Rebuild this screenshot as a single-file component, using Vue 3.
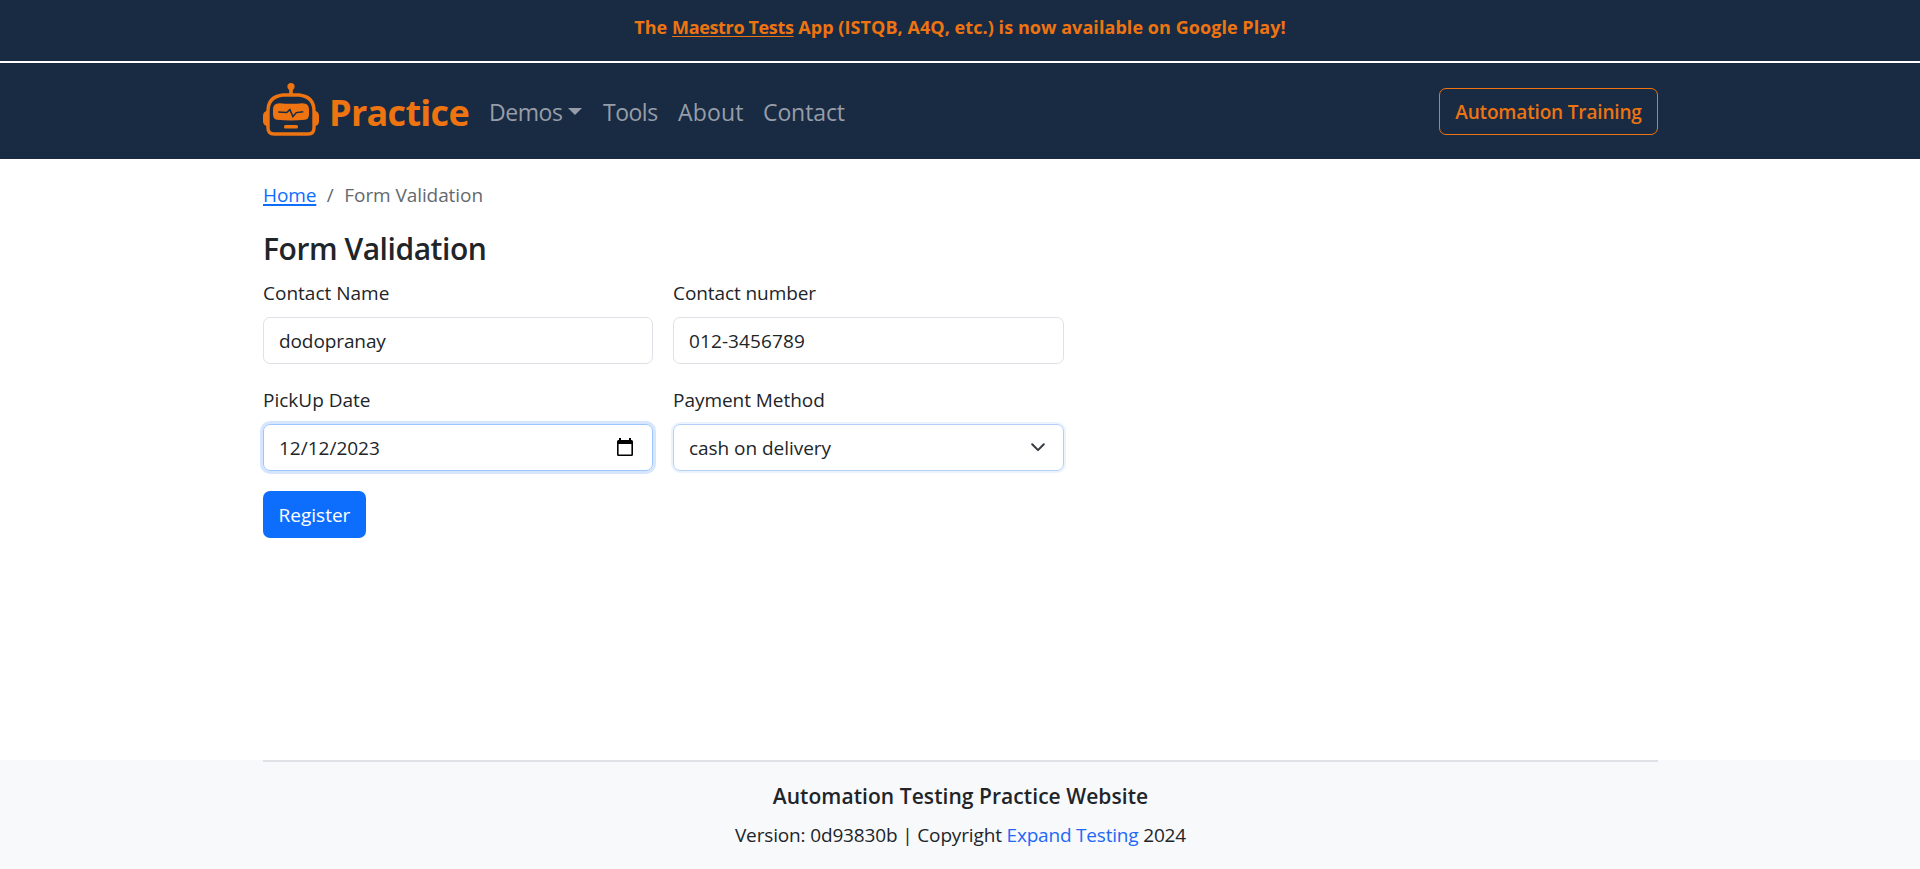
<script setup>
const links = [
  { label: 'Tools', cls: 'tools' },
  { label: 'About', cls: 'about' },
  { label: 'Contact', cls: 'contact' },
]
</script>

<template>
  <div class="page">
    <div class="banner">
      <span class="t-banner">The <a href="#">Maestro Tests</a> App (ISTQB, A4Q, etc.) is now available on Google Play!</span>
    </div>
    <header class="navbar">
      <div class="container nav-inner">
        <a class="brand" href="#">
          <svg class="robot" width="56" height="54" viewBox="0 0 56 54">
            <g fill="#ee7411">
              <circle cx="28" cy="3.600" r="3.600" />
              <rect x="26.200" y="6" width="3.600" height="6" />
              <path d="M5 28H3.500Q0 29 0 33v5q0 4 3.500 5H5zM51 28h1.500q3.500 1 3.500 5v5q0 4-3.500 5H51z" />
              <path d="M16.500 20.300q11.500 1 23 0q6.500 0 6.500 6v5q0 5-4 5.500q-14 1.200-28 0q-4-.5-4-5.500v-5q0-6 6.500-6z" />
              <rect x="21" y="42" width="14" height="3.600" rx="1.600" />
            </g>
            <path d="M20 12H36Q51 13.500 51 28V45Q51 51 45 51H11Q5 51 5 45V28Q5 13.500 20 12Z" fill="none" stroke="#ee7411" stroke-width="3.400" />
            <path d="M15.300 29l8.400.6 3.200-3 3 7 3.400-4 7-.8" fill="none" stroke="#182b43" stroke-width="1.500" />
          </svg>
          <span class="t-brand">Practice</span>
        </a>
        <nav class="links">
          <a class="link demos" href="#"><span>Demos</span><i class="caret"></i></a>
          <a v-for="l in links" :key="l.label" :class="['link', l.cls]" href="#">{{ l.label }}</a>
        </nav>
        <a class="training" href="#">Automation Training</a>
      </div>
    </header>

    <main class="container">
      <div class="crumbs">
        <a class="home" href="#">Home</a><span class="slash">/</span><span class="current">Form Validation</span>
      </div>
      <h1>Form Validation</h1>
      <form class="form" @submit.prevent>
        <div class="field">
          <label>Contact Name</label>
          <div class="control"><span class="v-name">dodopranay</span></div>
        </div>
        <div class="field">
          <label class="l-number">Contact number</label>
          <div class="control"><span class="v-number">012-3456789</span></div>
        </div>
        <div class="field">
          <label>PickUp Date</label>
          <div class="control focused">
            <span>12/12/2023</span>
            <svg class="calendar" width="16" height="18" viewBox="0 0 16 18">
              <path d="M2 0h2v2h8V0h2v2h.5Q16 2 16 3.500V16.500Q16 18 14.500 18h-13Q0 18 0 16.500v-13Q0 2 1.500 2H2zM1.600 6v10.400h12.800V6z" fill="#000" fill-rule="evenodd" />
            </svg>
          </div>
        </div>
        <div class="field">
          <label class="l-pay">Payment Method</label>
          <div class="control fading">
            <span class="v-pay">cash on delivery</span>
            <svg width="14" height="9" viewBox="0 0 14 9">
              <path d="M1.200 1.300L7 7.100l5.800-5.800" fill="none" stroke="#343a40" stroke-width="2" stroke-linecap="round" stroke-linejoin="round" />
            </svg>
          </div>
        </div>
        <button class="register" type="submit">Register</button>
      </form>
    </main>

    <footer>
      <div class="container foot">
        <div class="foot-title">Automation Testing Practice Website</div>
        <div class="foot-text">Version: 0d93830b | Copyright <a href="#">Expand Testing</a> 2024</div>
      </div>
    </footer>
  </div>
</template>

<style>
body { background: #fff; }
</style>

<style scoped>
* { box-sizing: border-box; }
.page {
  height: 869px;
  display: flex;
  flex-direction: column;
  font-family: "Open Sans", "Noto Sans", sans-serif;
  font-size: 19px;
  line-height: 30px;
  color: #212529;
  white-space: nowrap;
  overflow: hidden;
}
a { color: inherit; text-decoration: none; }
.container { width: 1395px; margin: 0 auto 0 263px; }
.banner {
  height: 63px;
  padding-top: 12px;
  background: #182b43;
  border-bottom: 2px solid #fff;
  color: #ee7411;
  text-align: center;
  font-weight: 700;
  font-size: 18px;
  letter-spacing: 0.06px;
}
.banner a { letter-spacing: -0.35px; text-decoration: underline; text-decoration-thickness: 1px; text-underline-offset: 2px; }
.navbar { height: 96px; background: #182b43; }
.nav-inner { height: 96px; display: flex; align-items: center; }
.brand { display: flex; align-items: center; color: #ee7411; width: 226px; }
.robot { margin-right: 10px; margin-bottom: 3px; }
.t-brand { font-size: 36px; font-weight: 700; letter-spacing: -0.7px; line-height: 50px; padding-top: 3px; }
.links { display: flex; font-size: 23px; color: #979da8; padding-top: 2px; }
.link { display: flex; align-items: center; }
.demos { width: 114px; letter-spacing: -0.45px; }
.tools { width: 75px; letter-spacing: -0.5px; }
.about { width: 85px; letter-spacing: 0.15px; }
.contact { letter-spacing: -0.1px; }
.caret { margin-left: 6px; margin-bottom: 2px; border: 7px solid transparent; border-top-color: #979da8; border-bottom: 0; }
.training {
  margin-left: auto;
  width: 219px;
  height: 47px;
  border: 1px solid #ee7411;
  border-radius: 7px;
  color: #ee7411;
  font-size: 19px;
  font-weight: 600;
  letter-spacing: -0.16px;
  line-height: 46px;
  text-align: center;
}
.crumbs { display: flex; margin-top: 21px; }
.home { color: #0d6efd; letter-spacing: -0.1px; text-decoration: underline; text-decoration-thickness: 2px; text-underline-offset: 2px; }
.slash { width: 28px; text-align: center; color: #63696f; }
.current { color: #63696f; letter-spacing: -0.08px; }
h1 { margin: 20px 0 0; font-size: 30px; line-height: 38px; font-weight: 600; letter-spacing: -0.45px; }
.form {
  margin-top: 10px;
  display: grid;
  grid-template-columns: 390px 391px;
  column-gap: 20px;
  row-gap: 21px;
}
.field { display: flex; flex-direction: column; gap: 11px; height: 86px; }
label { height: 28px; line-height: 30px; }
.l-number { letter-spacing: -0.08px; }
.l-pay { letter-spacing: -0.04px; }
.v-name { letter-spacing: -0.1px; }
.v-number { letter-spacing: 0.1px; }
.v-pay { letter-spacing: -0.04px; }
.control {
  height: 47px;
  display: flex;
  align-items: center;
  padding: 0 18px 0 15px;
  border: 1px solid #dee2e6;
  border-radius: 7px;
  justify-content: space-between;
}
.focused { padding-right: 19px; border-color: #9ec5fe; box-shadow: 0 0 0 3px #d6e6ff; }
.calendar { margin-bottom: 2px; }
.fading { border-color: #b5d0f7; box-shadow: 0 0 0 2px #ebf3ff; }
.register {
  margin-top: -1px;
  width: 103px;
  height: 47px;
  padding: 0;
  border: 0;
  border-radius: 7px;
  background: #0d6efd;
  color: #fff;
  font: inherit;
}
footer { margin-top: auto; height: 109px; background: #f8f9fb; }
.foot { height: 109px; border-top: 2px solid #dee2e6; text-align: center; padding-top: 19px; }
.foot-title { font-size: 21px; font-weight: 600; letter-spacing: 0.06px; }
.foot-text { margin-top: 9px; letter-spacing: -0.15px; }
.foot-text a { color: #2268f5; letter-spacing: -0.2px; }
</style>
